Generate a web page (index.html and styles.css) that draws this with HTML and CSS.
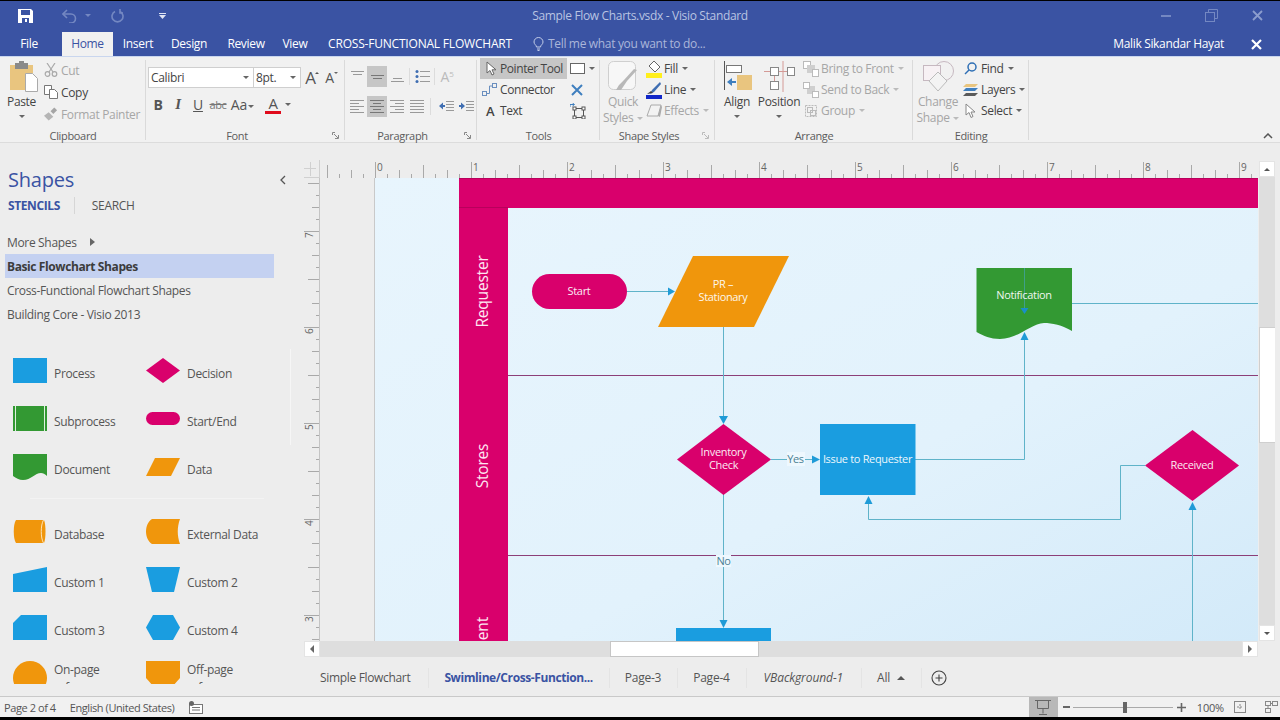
FILE: index.html
```html
<!DOCTYPE html>
<html>
<head>
    <title>Sample Flow Charts.vsdx - Visio Standard</title>
    <link rel="stylesheet" href="styles.css">
</head>
<body>
<div class="app">

    <!-- Title bar -->
    <div class="titlebar">
        <div class="qat">
            <svg class="qat-save" width="15" height="14" viewBox="0 0 15 14"><path d="M0 0H13L15 2V14H0Z" fill="#fff"/><rect x="3" y="1" width="9" height="5" fill="#3a53a3"/><rect x="4" y="9" width="7" height="5" fill="#3a53a3"/><rect x="7" y="10" width="2" height="3" fill="#fff"/></svg>
            <svg class="qat-undo" width="15" height="14" viewBox="0 0 15 14" fill="none" stroke="#7488c2" stroke-width="1.6"><path d="M5 1 1 5l4 4"/><path d="M1 5h8a4.500 4.500 0 0 1 0 9H7"/></svg>
            <span class="caret caret-dim qat-gap1"></span>
            <svg class="qat-redo" width="13" height="14" viewBox="0 0 13 14" fill="none" stroke="#7488c2" stroke-width="1.6"><path d="M9 2.500a5.500 5.500 0 1 1-5 0"/><path d="M9 0v4h3"/></svg>
            <svg class="qat-more" width="7" height="6" viewBox="0 0 7 6" fill="#dfe4f3"><rect width="7" height="1"/><path d="M0 2H7L3.500 6Z"/></svg>
        </div>
        <div class="doc-title">Sample Flow Charts.vsdx - Visio Standard</div>
        <div class="win-btns">
            <span class="win-min"></span>
            <svg width="13" height="13" viewBox="0 0 13 13" fill="none" stroke="#7488c2"><rect x=".5" y="3.500" width="9" height="9"/><path d="M3.500 3V.5h9v9H10"/></svg>
            <svg width="11" height="11" viewBox="0 0 11 11" stroke="#8c9dcd" stroke-width="1.8"><path d="M1 1l9 9M10 1l-9 9"/></svg>
        </div>
    </div>

    <!-- Ribbon tabs -->
    <div class="tabs">
        <span class="tab tab-file">File</span>
        <span class="tab tab-home">Home</span>
        <span class="tab tab-insert">Insert</span>
        <span class="tab tab-design">Design</span>
        <span class="tab tab-review">Review</span>
        <span class="tab tab-view">View</span>
        <span class="tab tab-cff">CROSS-FUNCTIONAL FLOWCHART</span>
        <svg class="bulb" width="11" height="14" viewBox="0 0 11 14" fill="none" stroke="#c3cde8"><path d="M3.500 10C3.500 8 1 7.500 1 5a4.500 4.500 0 0 1 9 0c0 2.500-2.500 3-2.500 5Z"/><path d="M4 12h3M4.500 13.500h2"/></svg>
        <span class="tell-me">Tell me what you want to do...</span>
        <span class="user">Malik Sikandar Hayat</span>
        <svg class="user-x" width="11" height="11" viewBox="0 0 11 11" stroke="#fff" stroke-width="2.200"><path d="M1 1l9 9M10 1l-9 9"/></svg>
    </div>

    <!-- Ribbon -->
    <div class="ribbon">

        <div class="group g-clipboard">
            <div class="group-body">
                <div class="big paste">
                    <svg width="28" height="31" viewBox="0 0 28 31"><rect y="4" width="23" height="25" fill="#e9c57f"/><rect x="5" y="2" width="13" height="6" fill="#8a8a8a"/><rect x="9" width="5" height="3" fill="#8a8a8a"/><path d="M15.500 12.500h7l5 5v13h-12Z" fill="#fff" stroke="#aaa"/></svg>
                    <span class="big-label">Paste</span>
                    <span class="caret"></span>
                </div>
                <div class="col clip-col">
                    <div class="rb dim">
                        <svg class="ic" width="14" height="14" viewBox="0 0 14 14" fill="none" stroke="#a9a9a9" stroke-width="1.200"><path d="M3 0l6 9M11 0 5 9"/><circle cx="3.500" cy="11" r="2.300"/><circle cx="10.500" cy="11" r="2.300"/></svg>
                        Cut
                    </div>
                    <div class="rb">
                        <svg class="ic" width="14" height="14" viewBox="0 0 14 14" fill="#fff" stroke="#777"><path d="M.5.5h7v9h-7Z"/><path d="M5.500 4.500h5l3 3v6h-8Z"/></svg>
                        Copy
                    </div>
                    <div class="rb dim">
                        <svg class="ic" width="15" height="14" viewBox="0 0 15 14"><path d="M0 9l5-4 5 5-5 4Z" fill="#b5b5b5"/><path d="M7 4l4-4 3 3-4 4Z" fill="#a5a5a5"/></svg>
                        Format Painter
                    </div>
                </div>
            </div>
            <div class="group-label">Clipboard</div>
        </div>

        <div class="group g-font">
            <div class="group-body stack">
                <div class="font-row">
                    <div class="combo combo-name"><span>Calibri</span><span class="caret"></span></div>
                    <div class="combo combo-size"><span>8pt.</span><span class="caret"></span></div>
                    <span class="grow-a">A<i class="caret-up"></i></span>
                    <span class="shrink-a">A<i class="caret"></i></span>
                </div>
                <div class="font-row fmt-row">
                    <b class="fmt">B</b>
                    <i class="fmt fmt-i">I</i>
                    <u class="fmt">U</u>
                    <s class="fmt fmt-abc">abc</s>
                    <span class="fmt fmt-aa">Aa<i class="caret"></i></span>
                    <span class="fmt-color">A</span>
                    <span class="caret"></span>
                </div>
            </div>
            <div class="group-label">Font</div>
            <svg class="launcher" width="7" height="7" viewBox="0 0 7 7" fill="none" stroke="#888"><path d="M.5 3V.5H3M2 2l4 4M6.500 3v3.500H3"/></svg>
        </div>

        <div class="group g-para">
            <div class="group-body stack">
                <div class="para-row">
                    <span class="pb"><svg width="13" height="13"><use href="#al-top"/></svg></span>
                    <span class="pb on"><svg width="13" height="13"><use href="#al-mid"/></svg></span>
                    <span class="pb"><svg width="13" height="13"><use href="#al-bot"/></svg></span>
                    <span class="vsep"></span>
                    <span class="pb"><svg width="15" height="13" viewBox="0 0 15 13" stroke="#9a9a9a"><path d="M5 1.500h10M5 6.500h10M5 11.500h10"/><g fill="#3f6eb2" stroke="none"><circle cx="2" cy="1.500" r="1.500"/><circle cx="2" cy="6.500" r="1.500"/><circle cx="2" cy="11.500" r="1.500"/></g></svg></span>
                    <span class="vsep"></span>
                    <span class="pb pb-dir">A<i>5</i></span>
                </div>
                <div class="para-row">
                    <span class="pb"><svg width="14" height="15"><use href="#ln-left"/></svg></span>
                    <span class="pb on"><svg width="14" height="15"><use href="#ln-center"/></svg></span>
                    <span class="pb"><svg width="14" height="15"><use href="#ln-right"/></svg></span>
                    <span class="pb"><svg width="14" height="15"><use href="#ln-just"/></svg></span>
                    <span class="vsep vsep-2"></span>
                    <span class="pb"><svg width="15" height="13" viewBox="0 0 15 13"><path d="M7 1.500h8M7 4.500h8M7 7.500h8M7 10.500h8" stroke="#9a9a9a"/><path d="M0 6l4-3.500V5h2v2H4v2.500Z" fill="#3f6eb2"/></svg></span>
                    <span class="pb"><svg width="15" height="13" viewBox="0 0 15 13"><path d="M7 1.500h8M7 4.500h8M7 7.500h8M7 10.500h8" stroke="#9a9a9a"/><path d="M6 6 2 2.500V5H0v2h2v2.500Z" fill="#3f6eb2"/></svg></span>
                </div>
            </div>
            <div class="group-label">Paragraph</div>
            <svg class="launcher" width="7" height="7" viewBox="0 0 7 7" fill="none" stroke="#888"><path d="M.5 3V.5H3M2 2l4 4M6.500 3v3.500H3"/></svg>
        </div>

        <div class="group g-tools">
            <div class="group-body">
                <div class="col tools-col">
                    <div class="rb tool tool-on">
                        <svg class="ic" width="11" height="15" viewBox="0 0 11 15"><path d="M1 1v11l3-2.500 2 4.500 2-1-2-4.200h4Z" fill="#fff" stroke="#666"/></svg>
                        Pointer Tool
                    </div>
                    <div class="rb tool">
                        <svg class="ic" width="15" height="13" viewBox="0 0 15 13" fill="none" stroke="#6a8fbf"><rect x=".5" y="8.500" width="4" height="4"/><rect x="10.500" y=".5" width="4" height="4"/><path d="M4.500 10.500h3v-7.500h3"/></svg>
                        Connector
                    </div>
                    <div class="rb tool"><span class="tool-a">A</span>Text</div>
                </div>
                <div class="col tools-right">
                    <div class="rb tool-ic"><span class="shape-swatch"></span><span class="caret"></span></div>
                    <div class="rb tool-ic"><svg width="12" height="12" viewBox="0 0 12 12" stroke="#3f7fbf" stroke-width="2"><path d="M1 1l10 10M11 1 1 11"/></svg></div>
                    <div class="rb tool-ic"><svg width="16" height="16" viewBox="0 0 16 16" fill="none" stroke="#555"><rect x="4.500" y="5.500" width="9" height="9"/><g fill="#fff"><rect x="3" y="4" width="3" height="3"/><rect x="12" y="4" width="3" height="3"/><rect x="3" y="13" width="3" height="3"/><rect x="12" y="13" width="3" height="3"/></g><path d="M0 4V1.500h4M2.500 0 4.500 1.500 2.500 3" stroke="#3f7fbf"/></svg></div>
                </div>
            </div>
            <div class="group-label">Tools</div>
        </div>

        <div class="group g-styles">
            <div class="group-body">
                <div class="big quick dim">
                    <svg width="30" height="31" viewBox="0 0 30 31"><rect x=".5" y=".5" width="27" height="28" rx="5" fill="#f7f7f7" stroke="#cfcfcf"/><path d="M29 9 19 20l-6 9h-5l3-5 5-5 10-11Z" fill="#b8b8b8"/></svg>
                    <span class="big-label">Quick</span>
                    <span class="big-label">Styles <i class="caret caret-soft"></i></span>
                </div>
                <div class="col styles-col">
                    <div class="rb">
                        <svg class="ic ic-wide" width="16" height="18" viewBox="0 0 16 18"><path d="M8 1l6 6-5 5-6-6Z" fill="#fff" stroke="#666"/><rect y="13" width="16" height="5" fill="#ffef1c"/></svg>
                        Fill <span class="caret"></span>
                    </div>
                    <div class="rb">
                        <svg class="ic ic-wide" width="16" height="18" viewBox="0 0 16 18"><path d="M14 1 6 9l-2 4 4-2 7-8Z" fill="#3f6eb2"/><path d="M1 13l4-3 2 2Z" fill="#444"/><rect y="14" width="16" height="4" fill="#1127c8"/></svg>
                        Line <span class="caret"></span>
                    </div>
                    <div class="rb dim">
                        <svg class="ic ic-wide" width="16" height="14" viewBox="0 0 16 14"><path d="M5 1h10l-3 11H1Z" fill="#f3f3f3" stroke="#aaa"/><path d="M12 12l3-11 1 2-2 10Z" fill="#aaa"/></svg>
                        Effects <span class="caret caret-soft"></span>
                    </div>
                </div>
            </div>
            <div class="group-label">Shape Styles</div>
            <svg class="launcher" width="7" height="7" viewBox="0 0 7 7" fill="none" stroke="#bbb"><path d="M.5 3V.5H3M2 2l4 4M6.500 3v3.500H3"/></svg>
        </div>

        <div class="group g-arrange">
            <div class="group-body">
                <div class="big align">
                    <svg width="29" height="31" viewBox="0 0 29 31"><path d="M1.500 0v29" stroke="#555" fill="none"/><rect x="3.500" y="4.500" width="15" height="7" fill="#fff" stroke="#777"/><rect x="14" y="14" width="15" height="15" fill="#e9c57f"/><path d="M4 21l5-4v3h4v2H9v3Z" fill="#3f7fbf"/></svg>
                    <span class="big-label">Align</span>
                    <span class="caret"></span>
                </div>
                <div class="big position">
                    <svg width="31" height="31" viewBox="0 0 31 31" fill="#fff" stroke="#d49a96"><path d="M0 10.500h31M10.500 10.500v10M19 0v31" fill="none"/><rect x="6.500" y="6.500" width="8" height="8" stroke="#888"/><rect x="23.500" y="6.500" width="7" height="8" stroke="#888"/><rect x="6.500" y="20.500" width="8" height="8" stroke="#888"/></svg>
                    <span class="big-label">Position</span>
                    <span class="caret"></span>
                </div>
                <div class="col arrange-col">
                    <div class="rb dim">
                        <svg class="ic ic-arr" width="16" height="16" viewBox="0 0 16 16"><rect x=".5" y=".5" width="7" height="7" fill="#fff" stroke="#bbb"/><rect x="4" y="4" width="8" height="8" fill="#cfcfcf"/><rect x="9.500" y="8.500" width="6" height="7" fill="#fff" stroke="#bbb"/></svg>
                        Bring to Front <span class="caret caret-soft"></span>
                    </div>
                    <div class="rb dim">
                        <svg class="ic ic-arr" width="16" height="16" viewBox="0 0 16 16"><rect x="4" y="4" width="8" height="8" fill="#cfcfcf"/><rect x=".5" y=".5" width="6" height="6" fill="#fff" stroke="#bbb"/><rect x="9.500" y="9.500" width="6" height="6" fill="#fff" stroke="#bbb"/></svg>
                        Send to Back <span class="caret caret-soft"></span>
                    </div>
                    <div class="rb dim">
                        <svg class="ic ic-arr" width="16" height="16" viewBox="0 0 16 16" fill="none" stroke="#bbb"><rect x="2.500" y="2.500" width="11" height="11" stroke-dasharray="2 1"/><rect x="4.500" y="4.500" width="5" height="5"/><rect x="7.500" y="7.500" width="5" height="5"/></svg>
                        Group <span class="caret caret-soft"></span>
                    </div>
                </div>
            </div>
            <div class="group-label">Arrange</div>
        </div>

        <div class="group g-editing">
            <div class="group-body">
                <div class="big change dim">
                    <svg width="31" height="31" viewBox="0 0 31 31" fill="none" stroke="#c6b8c0"><circle cx="21" cy="10" r="9.500"/><rect x=".5" y="4.500" width="17" height="15" fill="#f7f1f4"/><path d="M15 11l9 9-9 10-9-10Z" fill="#f3f3f3" stroke="#bbb"/></svg>
                    <span class="big-label">Change</span>
                    <span class="big-label">Shape <i class="caret caret-soft"></i></span>
                </div>
                <div class="col edit-col">
                    <div class="rb">
                        <svg class="ic ic-edit" width="13" height="13" viewBox="0 0 13 13" fill="none" stroke="#2e6fb5" stroke-width="1.500"><circle cx="8" cy="5" r="4"/><path d="M5 8l-4 4"/></svg>
                        Find <span class="caret"></span>
                    </div>
                    <div class="rb">
                        <svg class="ic ic-edit" width="15" height="14" viewBox="0 0 15 14"><path d="M3 1h12l-3 3H0Z" fill="#e9c57f"/><path d="M3 5h12l-3 3H0Z" fill="#3f7fbf"/><path d="M3 10h12l-3 3H0Z" fill="#5a5a5a"/></svg>
                        Layers <span class="caret"></span>
                    </div>
                    <div class="rb">
                        <svg class="ic ic-edit" width="11" height="16" viewBox="0 0 11 16"><path d="M1 1v11l3-2.500 2 5 2-1-2-4.500h4Z" fill="#fff" stroke="#888"/></svg>
                        Select <span class="caret"></span>
                    </div>
                </div>
            </div>
            <div class="group-label">Editing</div>
        </div>

        <div class="ribbon-end">
            <svg width="10" height="6" viewBox="0 0 10 6" fill="none" stroke="#555" stroke-width="1.500"><path d="M1 5l4-4 4 4"/></svg>
        </div>
    </div>

    <!-- Main area -->
    <div class="main">

        <!-- Shapes pane -->
        <div class="sidebar">
            <div class="side-head">
                <span class="side-title">Shapes</span>
                <svg width="6" height="10" viewBox="0 0 6 10" fill="none" stroke="#555" stroke-width="1.300"><path d="M5 1 1 5l4 4"/></svg>
            </div>
            <div class="side-tabs">
                <span class="side-tab-on">STENCILS</span>
                <span class="side-tab">SEARCH</span>
            </div>
            <div class="stencil-links">
                <div class="stencil-link">More Shapes <span class="more-arrow"></span></div>
                <div class="stencil-link active">Basic Flowchart Shapes</div>
                <div class="stencil-link">Cross-Functional Flowchart Shapes</div>
                <div class="stencil-link">Building Core - Visio 2013</div>
            </div>

            <div class="stencil-clip">
                <div class="stencil-grid stencil-first">
                    <div class="master"><svg width="34" height="26" viewBox="0 0 34 26"><rect width="34" height="25" fill="#1a9de0"/></svg>Process</div>
                    <div class="master"><svg width="34" height="26" viewBox="0 0 34 26"><path d="M17 0 34 12.500 17 25 0 12.500Z" fill="#d9006c"/></svg>Decision</div>
                    <div class="master"><svg width="34" height="26" viewBox="0 0 34 26"><rect width="34" height="25" fill="#339933"/><path d="M2.500 0v25M31.500 0v25" stroke="#dff0df"/></svg>Subprocess</div>
                    <div class="master"><svg width="34" height="26" viewBox="0 0 34 26"><rect y="6" width="34" height="13" rx="6.500" fill="#d9006c"/></svg>Start/End</div>
                    <div class="master"><svg width="34" height="26" viewBox="0 0 34 26"><path d="M0 0H34V22C32 20 30 19 28 19 22 19 18 26 10 26 6 26 3 24 0 22Z" fill="#339933"/></svg>Document</div>
                    <div class="master"><svg width="34" height="26" viewBox="0 0 34 26"><path d="M9 4H34L25 22H0Z" fill="#f0960c"/></svg>Data</div>
                </div>
                <div class="stencil-sep"></div>
                <div class="stencil-grid">
                    <div class="master"><svg width="34" height="26" viewBox="0 0 34 26"><path d="M3 1H31C33 5 33 20 31 24H3C0 20 0 5 3 1Z" fill="#f0960c"/><path d="M30.500 1C27.500 6 27.500 19 30.500 24" fill="none" stroke="#fde3b5"/></svg>Database</div>
                    <div class="master"><svg width="34" height="26" viewBox="0 0 34 26"><path d="M6 0H34C31 8 31 17 34 25H6C-2 20-2 5 6 0Z" fill="#f0960c"/></svg>External Data</div>
                    <div class="master"><svg width="34" height="26" viewBox="0 0 34 26"><path d="M0 7 34 0V25H0Z" fill="#1a9de0"/></svg>Custom 1</div>
                    <div class="master"><svg width="34" height="26" viewBox="0 0 34 26"><path d="M0 0H34L28 25H6Z" fill="#1a9de0"/></svg>Custom 2</div>
                    <div class="master"><svg width="34" height="26" viewBox="0 0 34 26"><path d="M8 0H34V25H0V8Z" fill="#1a9de0"/></svg>Custom 3</div>
                    <div class="master"><svg width="34" height="26" viewBox="0 0 34 26"><path d="M7 0H27L34 12.500 27 25H7L0 12.500Z" fill="#1a9de0"/></svg>Custom 4</div>
                    <div class="master master-tall"><svg width="34" height="26" viewBox="0 0 34 26"><circle cx="17" cy="17" r="17" fill="#f0960c"/></svg><span>On-page<br>reference</span></div>
                    <div class="master master-tall"><svg width="34" height="26" viewBox="0 0 34 26"><path d="M0 0H34V17L26 26H8L0 17Z" fill="#f0960c"/></svg><span>Off-page<br>reference</span></div>
                </div>
            </div>
        </div>

        <!-- Drawing area -->
        <div class="workspace">
            <svg class="ruler-h" width="954" height="18" viewBox="304 160 954 18">
                <defs>
                    <pattern id="ticks-h" x="375" y="160" width="96" height="18" patternUnits="userSpaceOnUse">
                        <path d="M.5 2V18M12.500 14V18M24.500 10V18M36.500 14V18M48.500 5V18M60.500 14V18M72.500 10V18M84.500 14V18" stroke="#a9a9a9"/>
                    </pattern>
                </defs>
                <rect x="320" y="160" width="938" height="18" fill="url(#ticks-h)"/>
                <path d="M304 168.500h12M310.500 162v14M304 177.500h16M319.500 160v18" stroke="#d0d0d0"/>
                <g class="ruler-num">
                    <text x="377" y="171">0</text><text x="473" y="171">1</text><text x="569" y="171">2</text>
                    <text x="665" y="171">3</text><text x="761" y="171">4</text><text x="857" y="171">5</text>
                    <text x="953" y="171">6</text><text x="1049" y="171">7</text><text x="1145" y="171">8</text>
                    <text x="1241" y="171">9</text>
                </g>
            </svg>

            <svg class="ruler-v" width="16" height="463" viewBox="304 178 16 463">
                <defs>
                    <pattern id="ticks-v" x="304" y="136" width="16" height="96" patternUnits="userSpaceOnUse">
                        <path d="M0 95.500H16M12 11.500H16M8 23.500H16M12 35.500H16M4 47.500H16M12 59.500H16M8 71.500H16M12 83.500H16" stroke="#a9a9a9"/>
                    </pattern>
                </defs>
                <rect x="304" y="178" width="16" height="463" fill="url(#ticks-v)"/>
                <path d="M319.500 178V641" stroke="#c4c4c4"/>
                <g class="ruler-num">
                    <text transform="translate(313 238) rotate(-90)">7</text>
                    <text transform="translate(313 334) rotate(-90)">6</text>
                    <text transform="translate(313 430) rotate(-90)">5</text>
                    <text transform="translate(313 526) rotate(-90)">4</text>
                    <text transform="translate(313 622) rotate(-90)">3</text>
                </g>
            </svg>

            <svg class="canvas" width="938" height="463" viewBox="320 178 938 463">
                <defs>
                    <linearGradient id="page-fill" x1="0" y1="0" x2="1" y2="1">
                        <stop offset="0" stop-color="#e8f5fd"/>
                        <stop offset=".6" stop-color="#e2f2fc"/>
                        <stop offset="1" stop-color="#d3eaf9"/>
                    </linearGradient>
                </defs>
                <rect x="375" y="178" width="883" height="463" fill="url(#page-fill)"/>
                <rect x="374" y="178" width="1" height="463" fill="#c9c9c9"/>

                <!-- swimlanes -->
                <rect x="459" y="178" width="799" height="30" fill="#d9006c"/>
                <rect x="459" y="208" width="49" height="433" fill="#d9006c"/>
                <path d="M459 178.500H1258M459 207.500H508" stroke="#b9005c"/>
                <path d="M508 375.500H1258M508 555.500H1258" stroke="#8c3f78"/>
                <g class="lane-text">
                    <text transform="translate(488 291.500) rotate(-90)">Requester</text>
                    <text transform="translate(488 466) rotate(-90)">Stores</text>
                    <text class="lane-cut" transform="translate(488 617) rotate(-90)">Department</text>
                </g>

                <!-- connectors -->
                <g class="conn">
                    <path d="M627 291.500H668"/>
                    <path d="M723.500 327V416"/>
                    <path d="M771 459.500H812"/>
                    <path d="M915 459.500H1024.500V340"/>
                    <path d="M1072 303.500H1258"/>
                    <path d="M1145 465.500H1120.500V519.500H868.500V504"/>
                    <path d="M1192.500 641V510"/>
                    <path d="M723.500 494V620"/>
                </g>
                <g class="heads">
                    <path d="M668 287.500 675 291.500 668 295.500Z"/>
                    <path d="M719 416H728L723.500 424Z"/>
                    <path d="M812 455.500 820 459.500 812 463.500Z"/>
                    <path d="M1020.500 340H1028.500L1024.500 332Z"/>
                    <path d="M864.500 504H872.500L868.500 496Z"/>
                    <path d="M1188.500 510H1196.500L1192.500 502Z"/>
                    <path d="M719.500 620H727.500L723.500 628Z"/>
                </g>

                <!-- shapes -->
                <rect x="532" y="274" width="95" height="35" rx="17.500" fill="#d9006c"/>
                <path d="M693 256H789L754 327H658Z" fill="#f0960c"/>
                <path d="M723.500 424 771 459.500 723.500 495 677 459.500Z" fill="#d9006c"/>
                <rect x="820" y="424" width="95.500" height="71" fill="#1a9de0"/>
                <path d="M976.500 268H1072V331C1062 325 1052 323 1044 323 1030 324 1018 339 1000 339 990 339 984 336 976.500 332Z" fill="#339933"/>
                <path d="M1024.500 268V308" stroke="#3fa08a"/>
                <path d="M1020.500 308H1028.500L1024.500 314Z" fill="#1a8fc9"/>
                <path d="M1192.500 430 1239 465.500 1192.500 501 1145 465.500Z" fill="#d9006c"/>
                <rect x="676" y="628" width="95" height="13" fill="#1a9de0"/>

                <rect x="787" y="452" width="18" height="14" fill="#eef8fe"/>
                <rect x="716" y="555" width="15" height="12" fill="#eef8fe"/>

                <g class="shape-text">
                    <text x="579" y="295">Start</text>
                    <text x="723" y="288">PR –</text>
                    <text x="723" y="301">Stationary</text>
                    <text x="723.500" y="456">Inventory</text>
                    <text x="723.500" y="469">Check</text>
                    <text x="867.500" y="463">Issue to Requester</text>
                    <text x="1024" y="299">Notification</text>
                    <text x="1192" y="469">Received</text>
                </g>
                <g class="conn-text">
                    <text x="795.500" y="463">Yes</text>
                    <text x="723.500" y="565">No</text>
                </g>
            </svg>

            <div class="vscroll">
                <span class="sb-btn"><i class="caret-up caret-dark"></i></span>
                <span class="sb-track sb-t1"></span>
                <span class="sb-thumb"></span>
                <span class="sb-track sb-t2"></span>
                <span class="sb-btn"><i class="caret caret-dark"></i></span>
            </div>

            <div class="hscroll">
                <span class="hs-btn"><i class="arrow-left"></i></span>
                <span class="hs-space1"></span>
                <span class="hs-thumb"></span>
                <span class="hs-space2"></span>
                <span class="hs-btn"><i class="arrow-right"></i></span>
            </div>

            <div class="page-tabs">
                <span class="page-tab page-tab-first">Simple Flowchart</span>
                <span class="page-tab page-tab-on">Swimline/Cross-Function...</span>
                <span class="page-tab">Page-3</span>
                <span class="page-tab">Page-4</span>
                <span class="page-tab page-tab-bg">VBackground-1</span>
                <span class="page-tab page-tab-all">All <i class="caret-up caret-dark all-up"></i></span>
                <svg class="add-page" width="16" height="16" viewBox="0 0 16 16" fill="none" stroke="#444" stroke-width="1.100"><circle cx="8" cy="8" r="7"/><path d="M8 4.500v7M4.500 8h7"/></svg>
            </div>
        </div>
    </div>

    <!-- Status bar -->
    <div class="status">
        <span class="st-page">Page 2 of 4</span>
        <span class="st-lang">English (United States)</span>
        <svg width="14" height="13" viewBox="0 0 14 13" fill="none" stroke="#777"><rect x=".5" y="3.500" width="13" height="9" fill="#fff"/><path d="M3 6.500h8M3 9h8"/><circle cx="2.500" cy="2.500" r="2.500" fill="#666" stroke="none"/></svg>
        <span class="st-fill"></span>
        <span class="st-present"><svg width="16" height="15" viewBox="0 0 16 15" fill="none" stroke="#666"><path d="M0 .5h16M2.500.5v8h11v-8M8 8.500v5M4 14.500h8"/></svg></span>
        <span class="zoom-minus"></span>
        <span class="zoom-track"><i class="zoom-thumb"></i></span>
        <svg class="zoom-plus" width="9" height="9" viewBox="0 0 9 9" stroke="#666" stroke-width="1.600"><path d="M0 4.500h9M4.500 0v9"/></svg>
        <span class="zoom-val">100%</span>
        <svg class="st-fit" width="12" height="12" viewBox="0 0 12 12" fill="none" stroke="#888"><rect x=".5" y=".5" width="11" height="11"/><path d="M3 6h6M6 3v6" stroke-dasharray="2 1"/></svg>
        <svg class="st-win" width="13" height="12" viewBox="0 0 13 12" fill="none" stroke="#888"><rect x=".5" y=".5" width="5" height="4"/><rect x="7.500" y=".5" width="5" height="4"/><rect x=".5" y="7.500" width="5" height="4"/><path d="M5.500 2.500h2M3 4.500v3"/></svg>
    </div>
</div>

<!-- shared paragraph glyphs -->
<svg class="defs" width="0" height="0">
    <symbol id="al-top" viewBox="0 0 13 13"><path d="M0 1.500h13M2 4.500h9" stroke="#999"/></symbol>
    <symbol id="al-mid" viewBox="0 0 13 13"><path d="M0 5.500h13M2 8.500h9" stroke="#777"/></symbol>
    <symbol id="al-bot" viewBox="0 0 13 13"><path d="M2 8.500h9M0 11.500h13" stroke="#999"/></symbol>
    <symbol id="ln-left" viewBox="0 0 14 15"><path d="M0 1.500h14M0 4.500h9M0 7.500h14M0 10.500h9M0 13.500h14" stroke="#999"/></symbol>
    <symbol id="ln-center" viewBox="0 0 14 15"><path d="M0 1.500h14M3 4.500h8M0 7.500h14M3 10.500h8M0 13.500h14" stroke="#777"/></symbol>
    <symbol id="ln-right" viewBox="0 0 14 15"><path d="M0 1.500h14M5 4.500h9M0 7.500h14M5 10.500h9M0 13.500h14" stroke="#999"/></symbol>
    <symbol id="ln-just" viewBox="0 0 14 15"><path d="M0 1.500h14M0 4.500h14M0 7.500h14M0 10.500h14M0 13.500h14" stroke="#999"/></symbol>
</svg>
</body>
</html>
```

FILE: styles.css
```css
/* --- Base --- */
* { box-sizing: border-box; }
html, body { margin: 0; height: 100%; overflow: hidden; }
body { background: #000; font-family: "Open Sans", "Noto Sans", sans-serif; font-size: 12px; letter-spacing: -0.33px; color: #444; }
.app { display: flex; flex-direction: column; height: 716px; margin-top: 1px; background: #ededed; }
.defs { position: absolute; }
svg { display: block; flex: none; }

/* --- Shared little shapes --- */
.caret { display: inline-block; width: 0; height: 0; border: 3px solid transparent; border-top-color: #666; border-bottom: 0; }
.caret-dim { border-top-color: #7488c2; }
.caret-soft { border-top-color: #bbb; }
.caret-dark { border-top-color: #555; }
.caret-up { display: inline-block; width: 0; height: 0; border: 3px solid transparent; border-bottom-color: #555; border-top: 0; }

/* --- Title bar --- */
.titlebar { display: grid; grid-template-columns: 1fr auto 1fr; align-items: center; height: 29px; background: #3a53a3; }
.qat { display: flex; align-items: center; padding-left: 18px; }
.qat-undo { margin-left: 29px; }
.qat-gap1 { margin-left: 8px; }
.qat-redo { margin-left: 20px; }
.qat-more { margin-left: 35px; }
.doc-title { color: #b9c4e2; font-size: 12px; }
.win-btns { display: flex; align-items: center; justify-content: flex-end; gap: 34px; padding-right: 17px; }
.win-min { width: 10px; height: 2px; background: #7488c2; }

/* --- Ribbon tabs --- */
.tabs { display: flex; align-items: flex-end; height: 26px; background: #3a53a3; color: #fff; }
.tab { display: block; height: 24px; line-height: 24px; text-align: center; flex: none; }
.tab-file { width: 38px; margin-left: 10px; }
.tab-home { width: 51px; margin-left: 14px; background: #f1f1f1; color: #3a53a3; }
.tab-insert { width: 38px; margin-left: 6px; }
.tab-design { width: 50px; margin-left: 7px; }
.tab-review { width: 50px; margin-left: 7px; }
.tab-view { width: 40px; margin-left: 4px; }
.tab-cff { width: 186px; margin-left: 12px; letter-spacing: -0.2px; }
.bulb { margin: 0 0 5px 20px; }
.tell-me { height: 24px; line-height: 24px; margin-left: 4px; color: #aab6da; }
.user { height: 24px; line-height: 24px; margin-left: auto; }
.user-x { margin: 0 18px 6px 27px; }

/* --- Ribbon --- */
.ribbon { display: flex; height: 87px; background: #f1f1f1; border-top: 1px solid #c9d6ee; border-bottom: 1px solid #dcdcdc; }
.group { position: relative; display: flex; flex-direction: column; flex: none; padding-top: 1px; }
.group::after { content: ""; position: absolute; right: 0; top: 3px; bottom: 2px; width: 1px; background: #dadada; }
.group-body { display: flex; flex: 1; min-height: 0; }
.group-body.stack { flex-direction: column; }
.group-label { height: 13px; line-height: 14px; text-align: center; font-size: 11px; color: #5c5c5c; }
.g-font .group-label, .g-para .group-label, .g-styles .group-label { padding-right: 17px; }
.launcher { position: absolute; right: 6px; bottom: 3px; }
.g-clipboard { width: 146px; }
.g-font { width: 199px; }
.g-para { width: 132px; }
.g-tools { width: 123px; }
.g-styles { width: 115px; }
.g-arrange { width: 198px; }
.g-editing { width: 116px; }
.ribbon-end { flex: 1; display: flex; align-items: flex-end; justify-content: flex-end; padding: 0 7px 3px 0; }

.col { display: flex; flex-direction: column; flex: none; }
.rb { display: flex; align-items: center; height: 21px; white-space: nowrap; gap: 0; }
.rb .caret { margin-left: 4px; }
.dim { color: #a6a6a6; }
.ic { margin-right: 3px; }

.big { display: flex; flex-direction: column; align-items: center; flex: none; padding-top: 3px; line-height: 16px; }
.big-label { margin-top: 2px; height: 14px; line-height: 14px; white-space: nowrap; }
.big svg + .big-label { margin-top: 3px; }
.big > .caret { margin-top: 6px; }
.big-label .caret { margin-left: 1px; vertical-align: middle; }

/* clipboard */
.paste { width: 43px; }
.paste svg { margin-left: 4px; }
.clip-col { padding: 1px 0 0 1px; }
.clip-col .rb { height: 22px; }
.clip-col .ic { width: 14px; margin-right: 3px; }

/* font */
.font-row { display: flex; align-items: center; padding-left: 2px; }
.g-font .group-body { padding-top: 9px; }
.combo { display: flex; align-items: center; justify-content: space-between; height: 21px; padding: 0 4px 0 2px; background: #fff; border: 1px solid #cfcfcf; }
.combo-name { width: 105px; border-right: 0; }
.combo-size { width: 48px; }
.grow-a, .shrink-a { position: relative; width: 19px; text-align: center; font-size: 17px; line-height: 21px; color: #555; }
.shrink-a { font-size: 14px; }
.grow-a i { position: absolute; left: 14px; top: 5px; border-width: 2px; border-top: 0; }
.shrink-a i { position: absolute; left: 14px; top: 5px; border-width: 2px; border-bottom: 0; }
.fmt-row { margin-top: 6px; height: 21px; }
.fmt { width: 20px; text-align: center; font-size: 14px; color: #555; }
.fmt-i { font-family: "Liberation Serif", serif; font-weight: bold; font-size: 15px; }
.fmt-abc { font-size: 11px; color: #777; }
.fmt-aa { width: 29px; font-size: 14px; letter-spacing: 0; white-space: nowrap; }
.fmt-aa i { margin-left: 1px; vertical-align: middle; }
.fmt-color { width: 16px; margin-left: 8px; margin-right: 4px; text-align: center; font-size: 15px; line-height: 16px; color: #555; border-bottom: 3px solid #e00b1c; }

/* paragraph */
.g-para .group-body { padding-top: 8px; gap: 9px; }
.para-row { display: flex; align-items: center; height: 21px; padding-left: 2px; }
.pb { display: flex; align-items: center; justify-content: center; flex: none; width: 20px; height: 21px; }
.pb.on { background: #c6c6c6; }
.pb-dir { color: #bbb; font-size: 14px; }
.pb-dir i { font-size: 8px; margin-bottom: 6px; font-style: normal; }
.vsep { flex: none; width: 1px; height: 17px; margin: 0 2px 0 2px; background: #dcdcdc; }
.vsep-2 { margin: 0 5px 0 3px; }

/* tools */
.tools-col { width: 91px; padding: 0 0 0 3px; }
.tool { height: 21px; padding-left: 6px; color: #444; letter-spacing: -0.42px; }
.tool .ic { margin-right: 3px; }
.tool-on { width: 87px; background: #c6c6c6; }
.tool:nth-child(2) { padding-left: 2px; }
.tool-a { width: 14px; font-weight: 600; font-size: 13px; }
.tools-right { padding-top: 0; }
.tool-ic { padding-left: 2px; }
.tool-ic:nth-child(2) { padding-left: 3px; }
.shape-swatch { width: 15px; height: 11px; background: #fff; border: 1px solid #666; }

/* shape styles */
.quick { width: 46px; }
.styles-col { padding: 0; }
.styles-col .ic-wide { margin-right: 2px; }

/* arrange */
.align { width: 44px; }
.position { width: 44px; margin-left: -2px; }
.arrange-col { margin-left: 2px; }
.ic-arr { margin-right: 2px; }

/* editing */
.change { width: 50px; }
.ic-edit { width: 15px; margin-right: 3px; }

/* --- Main --- */
.main { display: flex; height: 553px; background: #ededed; }
.sidebar { flex: none; width: 304px; display: flex; flex-direction: column; color: #555; }
.side-head { display: flex; align-items: center; justify-content: space-between; height: 28px; margin-top: 23px; padding: 0 18px 0 8px; }
.side-title { font-size: 20px; line-height: 28px; color: #3a53a3; letter-spacing: -0.2px; }
.side-tabs { display: flex; align-items: center; height: 18px; margin-top: 2px; padding-left: 8px; }
.side-tab-on { padding-right: 14px; border-right: 1px solid #d6d6d6; font-weight: bold; color: #3a53a3; letter-spacing: -0.4px; }
.side-tab { padding-left: 17px; }
.stencil-links { margin-top: 16px; }
.stencil-link { display: flex; align-items: center; height: 24px; margin-right: 30px; margin-left: 5px; padding-left: 2px; }
.stencil-link.active { background: #c4d1f1; font-weight: bold; color: #3c3c3c; letter-spacing: -0.4px; }
.more-arrow { width: 0; height: 0; margin-left: 13px; border: 4px solid transparent; border-left: 5px solid #666; border-right: 0; }

.stencil-clip { height: 335px; margin-top: 23px; overflow: hidden; }
.stencil-grid { display: grid; grid-template-columns: 133px 133px; grid-auto-rows: 48px; padding-left: 13px; }
.stencil-first { background: linear-gradient(#f6f6f6, #f6f6f6) no-repeat 290px 0 / 1px 96px; }
.stencil-sep { height: 1px; margin: 5px 40px 11px 30px; background: #f3f3f3; }
.master { display: flex; align-items: center; gap: 7px; white-space: nowrap; }
.master svg { margin-bottom: 4px; }
.master-tall { align-items: flex-start; padding-top: 7px; }
.master-tall svg { overflow: visible; margin-bottom: 0; }
.master-tall span { line-height: 18px; }

/* --- Workspace --- */
.workspace { flex: none; display: grid; grid-template-columns: 16px 938px 1px 16px; grid-template-rows: 18px 463px 16px 39px; padding-top: 17px; }
.ruler-h { grid-column: 1 / 3; grid-row: 1; }
.ruler-v { grid-column: 1; grid-row: 2; }
.canvas { grid-column: 2; grid-row: 2; }
.ruler-num text { font-size: 10px; fill: #666; letter-spacing: 0; }
.lane-text text { font-size: 15.500px; fill: #fde6f1; text-anchor: middle; letter-spacing: -0.2px; }
.lane-text .lane-cut { text-anchor: end; }
.conn path { fill: none; stroke: #5fb3c9; }
.heads path { fill: #1f9bd7; }
.shape-text text { font-size: 11px; fill: #fff; text-anchor: middle; opacity: .92; }
.conn-text text { font-size: 11px; fill: #4a7f93; text-anchor: middle; }

.vscroll { grid-column: 4; grid-row: 1 / 3; display: flex; flex-direction: column; margin-top: 1px; }
.sb-btn { display: flex; align-items: center; justify-content: center; flex: none; height: 16px; background: #fff; border: 1px solid #e4e4e4; }
.sb-track { flex: none; background: #dedede; }
.sb-t1 { height: 150px; }
.sb-t2 { height: 182px; }
.sb-thumb { flex: none; height: 116px; background: #fff; border: 1px solid #cfcfcf; border-right: 0; }

.hscroll { grid-column: 1 / 3; grid-row: 3; display: flex; background: #dedede; }
.hs-btn { display: flex; align-items: center; justify-content: center; flex: none; width: 16px; background: #fff; border: 1px solid #e4e4e4; }
.hs-space1 { flex: none; width: 290px; }
.hs-thumb { flex: none; width: 149px; background: #fff; border: 1px solid #c6c6c6; }
.hs-space2 { flex: none; width: 483px; }
.arrow-left { width: 0; height: 0; border: 4px solid transparent; border-right: 4px solid #666; border-left: 0; }
.arrow-right { width: 0; height: 0; border: 4px solid transparent; border-left: 4px solid #666; border-right: 0; }

.page-tabs { grid-column: 1 / -1; display: flex; align-items: center; height: 39px; padding: 2px 0 0 16px; color: #555; }
.page-tab { display: flex; align-items: center; height: 20px; padding: 0 16px 0 15px; border-right: 1px solid #e4e4e4; white-space: nowrap; letter-spacing: -0.25px; }
.page-tab-first { padding: 0 18px 0 0; letter-spacing: -0.33px; }
.page-tab-on { padding-right: 16px; font-weight: bold; color: #3a53a3; letter-spacing: -0.4px; }
.page-tab-bg { padding: 0 18px 0 17px; font-style: italic; letter-spacing: -0.1px; }
.page-tab-all { padding-left: 15px; }
.all-up { margin-left: 7px; border-width: 4px; border-top: 0; }
.add-page { margin-left: 9px; }

/* --- Status bar --- */
.status { display: flex; align-items: center; height: 21px; padding-left: 4px; background: #f1f1f1; border-top: 1px solid #c9c9c9; font-size: 11px; letter-spacing: -0.42px; color: #555; }
.st-lang { margin: 0 15px 0 14px; }
.st-fill { flex: 1; }
.st-present { display: flex; align-items: center; justify-content: center; width: 29px; height: 20px; background: #b8b8b8; }
.zoom-minus { width: 7px; height: 2px; margin-left: 5px; background: #666; }
.zoom-track { position: relative; width: 100px; height: 1px; margin-left: 3px; background: #aaa; }
.zoom-thumb { position: absolute; left: 50px; top: -5px; width: 4px; height: 11px; background: #666; }
.zoom-plus { margin-left: 4px; }
.zoom-val { margin-left: 11px; letter-spacing: -0.2px; }
.st-fit { margin-left: 10px; }
.st-win { margin: 0 2px 0 19px; }
```
